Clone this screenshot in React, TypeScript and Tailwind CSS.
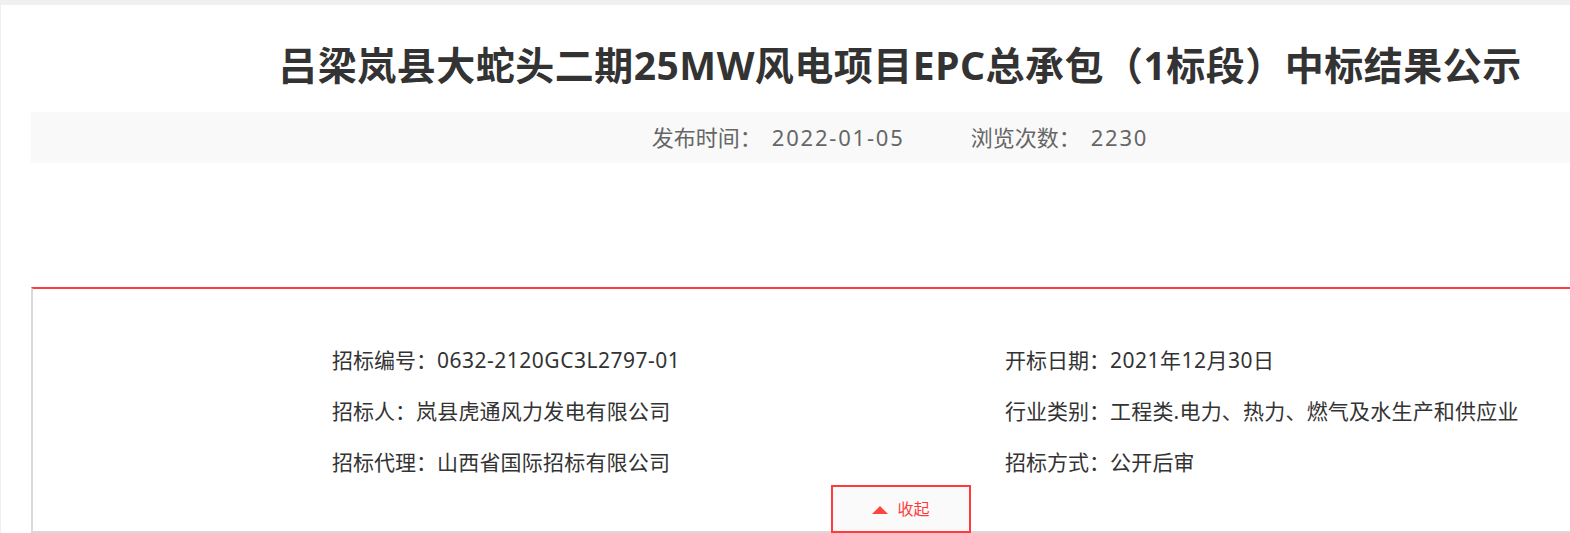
import React from 'react';

const font = { fontFamily: '"Noto Sans", "Noto Sans CJK SC", sans-serif' };

const leftRows = [
  { label: '招标编号：', value: '0632-2120GC3L2797-01', num: true },
  { label: '招标人：', value: '岚县虎通风力发电有限公司' },
  { label: '招标代理：', value: '山西省国际招标有限公司' },
];

const rightRows = [
  { label: '开标日期：', value: '2021年12月30日', num: true },
  { label: '行业类别：', value: '工程类.电力、热力、燃气及水生产和供应业' },
  { label: '招标方式：', value: '公开后审' },
];

function InfoRow({ label, value, num }: { label: string; value: string; num?: boolean }) {
  return (
    <div className="flex h-[51px] items-center whitespace-nowrap text-[21px] text-[#333]">
      <span>{label}</span>
      <span className={num ? 'tracking-[0.5px]' : 'tracking-[0.2px]'}>{value}</span>
    </div>
  );
}

export default function App() {
  return (
    <div className="h-[533px] w-full overflow-hidden bg-[#f0f0f0]" style={font}>
      <div className="ml-px mt-[5px] h-[528px] w-[1798px] bg-white">
        <h1 className="pt-[36px] pb-[23px] text-center text-[39px] font-bold leading-[48px] tracking-[0.5px] text-[#333]">
          吕梁岚县大蛇头二期25MW风电项目EPC总承包（1标段）中标结果公示
        </h1>
        <div className="mx-[30px] flex h-[51px] items-center justify-center gap-[66px] bg-[#f9f9f9] text-[22px] text-[#666]">
          <span>
            发布时间：<span className="ml-[10px] tracking-[1.8px]">2022-01-05</span>
          </span>
          <span>
            浏览次数：<span className="ml-[10px] tracking-[1.8px]">2230</span>
          </span>
        </div>
        <div className="relative mx-[30px] mt-[124px] h-[246px] border-t-2 border-b-2 border-l-2 border-t-[#ff3b3b] border-b-[#d9d9d9] border-l-[#d9d9d9] pt-[46px] pl-[299px]">
          <div className="grid grid-cols-[673px_1fr]">
            <div className="flex flex-col">
              {leftRows.map((r) => (
                <InfoRow key={r.label} {...r} />
              ))}
            </div>
            <div className="flex flex-col">
              {rightRows.map((r) => (
                <InfoRow key={r.label} {...r} />
              ))}
            </div>
          </div>
          <button className="absolute top-[196px] left-1/2 flex h-[48px] w-[140px] -translate-x-1/2 items-start justify-center gap-[9px] border-2 border-[#ff3b3b] bg-[#fafafa] pt-[10px] text-[16px] text-[#ff3b3b]">
            <svg width="16" height="8" viewBox="0 0 16 8" className="mt-[9px]">
              <polygon points="8,0 16,8 0,8" fill="#ff4343" />
            </svg>
            <span className="leading-[24px]">收起</span>
          </button>
        </div>
      </div>
    </div>
  );
}
